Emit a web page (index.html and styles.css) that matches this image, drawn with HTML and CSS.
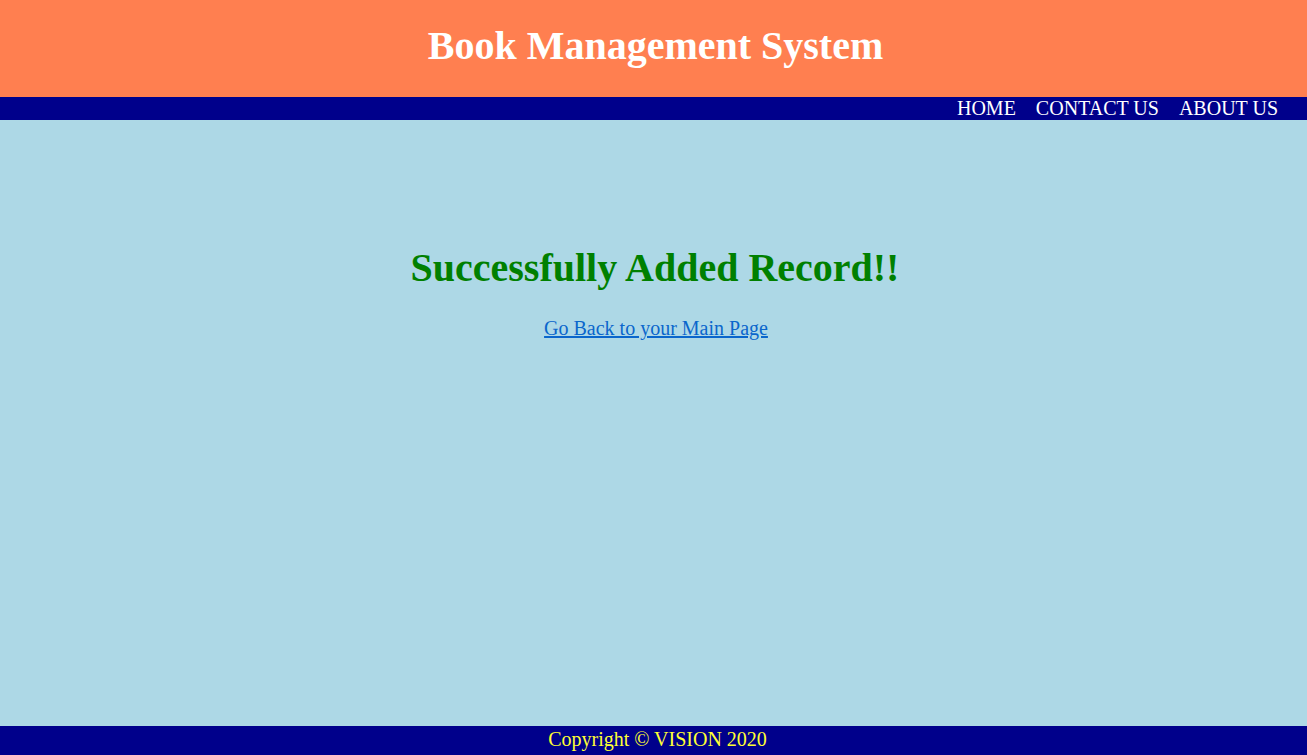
FILE: index.html
```html
<!DOCTYPE html>
<html>
<head>
<meta charset="utf-8">
<title>Book Management System</title>
<link rel="stylesheet" href="styles.css">
</head>
<body>
<header class="site-header">
  <h1 class="site-title">Book Management System</h1>
</header>
<nav class="site-nav">
  <a class="nav-link" href="#">HOME</a>
  <a class="nav-link" href="#">CONTACT US</a>
  <a class="nav-link" href="#">ABOUT US</a>
</nav>
<main class="content">
  <h2 class="success">Successfully Added Record!!</h2>
  <a class="back-link" href="#">Go Back to your Main Page</a>
</main>
<footer class="site-footer">Copyright © VISION 2020</footer>
</body>
</html>
```
FILE: styles.css
```css
html, body {
  margin: 0;
  padding: 0;
  height: 100%;
}
body {
  font-family: "Liberation Serif", "Times New Roman", serif;
  background: #ADD8E6;
  display: flex;
  flex-direction: column;
  min-height: 100vh;
}
.site-header {
  background: #FF7F50;
  height: 97px;
  display: flex;
  align-items: center;
  justify-content: center;
  padding-left: 4px;
  box-sizing: border-box;
}
.site-title {
  margin: 0 0 6px 0;
  color: #fff;
  font-size: 40px;
  font-weight: bold;
  line-height: 46px;
}
.site-nav {
  background: #00008B;
  height: 23px;
  display: flex;
  justify-content: flex-end;
  align-items: center;
  gap: 20px;
  padding-right: 29px;
}
.nav-link {
  color: #fff;
  text-decoration: none;
  font-size: 20px;
  line-height: 23px;
}
.content {
  flex: 1;
  display: flex;
  flex-direction: column;
  align-items: center;
  padding-top: 125px;
  padding-left: 3px;
}
.success {
  margin: 0;
  color: #008000;
  font-size: 40px;
  font-weight: bold;
  line-height: 46px;
}
.back-link {
  margin-top: 26px;
  margin-left: 2px;
  color: #0a66cc;
  font-size: 20px;
  line-height: 23px;
}
.site-footer {
  background: #00008B;
  color: #FFFF33;
  height: 29px;
  font-size: 20px;
  line-height: 27px;
  text-align: center;
  padding-left: 8px;
}
```
